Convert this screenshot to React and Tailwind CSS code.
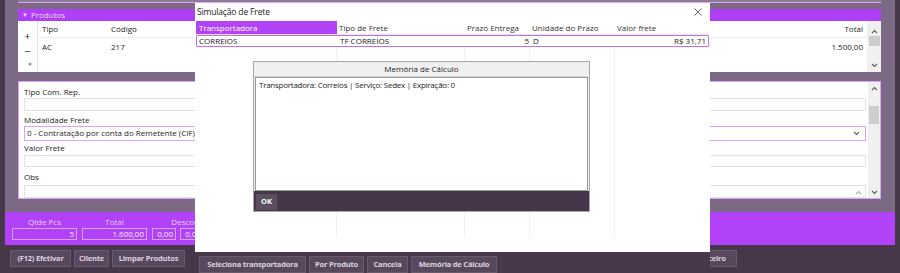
const ChevUp = ({ className = "" }) => (
  <svg width="7" height="5" viewBox="0 0 7 5" className={className}>
    <path d="M1 4 L3.5 1.5 L6 4" fill="none" stroke="#606060" strokeWidth="1.1" />
  </svg>
);

const ChevDown = ({ className = "" }) => (
  <svg width="7" height="5" viewBox="0 0 7 5" className={className}>
    <path d="M1 1 L3.5 3.5 L6 1" fill="none" stroke="#606060" strokeWidth="1.1" />
  </svg>
);

const Btn = ({ children, className = "" }) => (
  <div
    className={`h-[17px] flex items-center justify-center bg-[#57485b] border border-[#695a6d] text-[#ddd2e0] font-bold text-[7.5px] tracking-[-0.2px] leading-none whitespace-nowrap ${className}`}
  >
    {children}
  </div>
);

function Produtos() {
  return (
    <div className="mt-[6px] flex flex-col">
      <div className="h-[12px] bg-[#b03ef6] flex items-center pl-[4px] gap-[3px] text-[#f1dcff]">
        <span className="text-[6px] leading-none">▼</span>
        <span className="text-[8px] leading-none">Produtos</span>
      </div>
      <div className="h-[51px] bg-white flex">
        <div className="w-[20px] border-r border-[#e4e4e4] flex flex-col items-center text-[#333]">
          <span className="mt-[9px] text-[11px] leading-[12px]">+</span>
          <span className="mt-[3px] text-[11px] leading-[12px]">−</span>
          <span className="mt-[2px] ml-[4px] text-[7px] leading-[10px] rotate-90">»</span>
        </div>
        <div className="flex-1 flex flex-col">
          <div className="h-[17px] flex items-end pb-[2px] border-b border-[#ececec]">
            <span className="w-[73px] pl-[4px]">Tipo</span>
            <span className="flex-1">Código</span>
            <span className="pr-[4px]">Total</span>
          </div>
          <div className="h-[17px] flex items-center">
            <span className="w-[73px] pl-[4px]">AC</span>
            <span className="flex-1">217</span>
            <span className="pr-[4px]">1.500,00</span>
          </div>
        </div>
        <div className="w-[14px] bg-[#f0f0f0] flex flex-col items-center">
          <ChevUp className="mt-[8px]" />
          <div className="mt-[2px] w-[11px] h-[10px] bg-[#cdcdcd]" />
          <div className="flex-1" />
          <ChevDown className="mb-[4px]" />
        </div>
      </div>
    </div>
  );
}

function Fields() {
  return (
    <div className="mt-[9px] h-[118px] bg-white border-[1.5px] border-[#d8a4fb] flex overflow-hidden">
      <div className="flex-1 pl-[5px] pr-[2px] flex flex-col">
        <span className="mt-[5px] leading-[10px]">Tipo Com. Rep.</span>
        <div className="mt-[1px] h-[14px] border border-[#e3e3e3]" />
        <span className="mt-[4px] leading-[10px]">Modalidade Frete</span>
        <div className="mt-[1px] h-[17px] border-[1.5px] border-[#d8a4fb] flex items-center pl-[2px] pr-[5px]">
          <span className="flex-1">0 - Contratação por conta do Remetente (CIF);</span>
          <ChevDown />
        </div>
        <span className="mt-[2px] leading-[10px]">Valor Frete</span>
        <div className="mt-[2px] h-[13px] border border-[#e3e3e3]" />
        <span className="mt-[5px] leading-[10px]">Obs</span>
        <div className="mt-[3px] h-[14px] border border-[#e3e3e3] flex justify-end pr-[3px] pt-[4px]">
          <ChevUp className="opacity-50" />
        </div>
      </div>
      <div className="w-[12px] bg-[#f0f0f0] flex flex-col items-center">
        <ChevUp className="mt-[4px]" />
        <div className="mt-[15px] w-[10px] h-[18px] bg-[#cdcdcd]" />
        <div className="flex-1" />
        <ChevDown className="mb-[3px]" />
      </div>
    </div>
  );
}

function TotBox({ value, w }) {
  return (
    <div
      className={`${w} h-[12px] border border-[#d9a0fb] text-[#f6ebff] text-right pr-[2px] leading-[10px]`}
    >
      {value}
    </div>
  );
}

function Totals() {
  return (
    <div className="h-[33px] bg-[#b142f7] flex items-start pl-[7px] gap-[5px] text-[8px]">
      <div className="flex flex-col items-center">
        <span className="mt-[5px] leading-[10px] text-[#eccdff]">Qtde Pcs</span>
        <div className="mt-[1px]"><TotBox value="5" w="w-[65px]" /></div>
      </div>
      <div className="flex flex-col items-center">
        <span className="mt-[5px] leading-[10px] text-[#eccdff]">Total</span>
        <div className="mt-[1px]"><TotBox value="1.600,00" w="w-[65px]" /></div>
      </div>
      <div className="flex flex-col items-center">
        <span className="mt-[5px] leading-[10px] text-[#eccdff] -translate-x-[3px]">Desconto</span>
        <div className="mt-[1px] flex gap-[4px]">
          <TotBox value="0,00" w="w-[24px]" />
          <TotBox value="0,00" w="w-[24px]" />
          <TotBox value="0,00" w="w-[24px]" />
        </div>
      </div>
    </div>
  );
}

const cols = [
  { w: "w-[141px]", head: "Transportadora", val: "CORREIOS", right: false },
  { w: "w-[128px]", head: "Tipo de Frete", val: "TF CORREIOS", right: false },
  { w: "w-[65px]", head: "Prazo Entrega", val: "5", right: true },
  { w: "w-[85px]", head: "Unidade do Prazo", val: "D", right: false },
  { w: "flex-1", head: "Valor frete", val: "R$ 31,71", right: true },
];

function Dialog() {
  return (
    <div className="absolute left-[195px] top-[3px] w-[515px] h-[270px] bg-white flex flex-col text-[#1c1c1c]">
      <div className="h-[18px] flex items-center pl-[2px] pr-[8px]">
        <span className="flex-1 text-[8.5px] tracking-[-0.15px]">Simulação de Frete</span>
        <svg width="8" height="8" viewBox="0 0 8 8">
          <path d="M0.5 0.5 L7.5 7.5 M7.5 0.5 L0.5 7.5" stroke="#555" strokeWidth="0.9" />
        </svg>
      </div>
      <div className="flex flex-col px-[1px]">
        <div className="h-[14px] flex border-b border-[#e6e6e6]">
          {cols.map((c, i) => (
            <div
              key={c.head}
              className={`${c.w} flex items-center ${
                i === 0 ? "bg-[#b244f7] text-white pl-[3px]" : "pl-[2px] text-[#333]"
              }`}
            >
              {c.head}
            </div>
          ))}
        </div>
        <div className="h-[12px] flex border-[1.5px] border-[#bf6ef5] rounded-[1px]">
          {cols.map((c) => (
            <div
              key={c.head}
              className={`${c.w} flex items-center ${c.right ? "justify-end pr-[2px]" : "pl-[2px]"}`}
            >
              {c.val}
            </div>
          ))}
        </div>
        <div className="h-[191px] flex">
          {cols.map((c, i) => (
            <div key={c.head} className={`${c.w} ${i < 4 ? "border-r border-[#f1f1f1]" : ""}`} />
          ))}
        </div>
      </div>
      <div className="flex-1" />
      <div className="h-[21px] bg-[#47384b] flex items-start pt-[4px] pl-[4px] gap-[3px]">
        <Btn className="w-[107px] h-[16px]">Seleciona transportadora</Btn>
        <Btn className="w-[55px] h-[16px]">Por Produto</Btn>
        <Btn className="w-[41px] h-[16px]">Cancela</Btn>
        <Btn className="w-[86px] h-[16px]">Memória de Cálculo</Btn>
      </div>

      <div className="absolute left-[58px] top-[58px] w-[337px] h-[151px] border border-[#a8a8a8] bg-[#f0f0f0] flex flex-col">
        <div className="h-[15px] flex items-center justify-center border-b border-[#d4d4d4]">
          Memória de Cálculo
        </div>
        <div className="mx-[1px] h-[114px] bg-white border border-[#999] pl-[3px] pt-[2px] leading-[10px] tracking-[-0.25px]">
          Transportadora: Correios | Serviço: Sedex | Expiração: 0
        </div>
        <div className="flex-1 bg-[#46364a] flex items-start pt-[3px] pl-[2px]">
          <div className="w-[21px] h-[16px] bg-[#5d4e61] flex items-center justify-center text-white font-bold text-[7.5px]">
            OK
          </div>
        </div>
      </div>
    </div>
  );
}

export default function App() {
  return (
    <div className="relative w-[900px] h-[273px] overflow-hidden bg-[#463749] font-['Open_Sans',sans-serif] text-[8px] text-[#1c1c1c]">
      <div className="ml-[5px] w-[890px] flex flex-col">
        <div className="h-[212px] bg-[#7c6a85] pl-[13px] pr-[14px] flex flex-col">
          <div className="h-[3px] bg-[#8e7b98] border-b border-[#d9a8fb]" />
          <Produtos />
          <Fields />
        </div>
        <Totals />
        <div className="h-[28px] flex items-start pt-[5px] pl-[5px] gap-[3px]">
          <Btn className="w-[61px]">(F12) Efetivar</Btn>
          <Btn className="w-[35px]">Cliente</Btn>
          <Btn className="w-[73px]">Limpar Produtos</Btn>
          <Btn className="ml-auto mr-[158px] w-[60px]">Financeiro</Btn>
        </div>
      </div>
      <Dialog />
    </div>
  );
}
